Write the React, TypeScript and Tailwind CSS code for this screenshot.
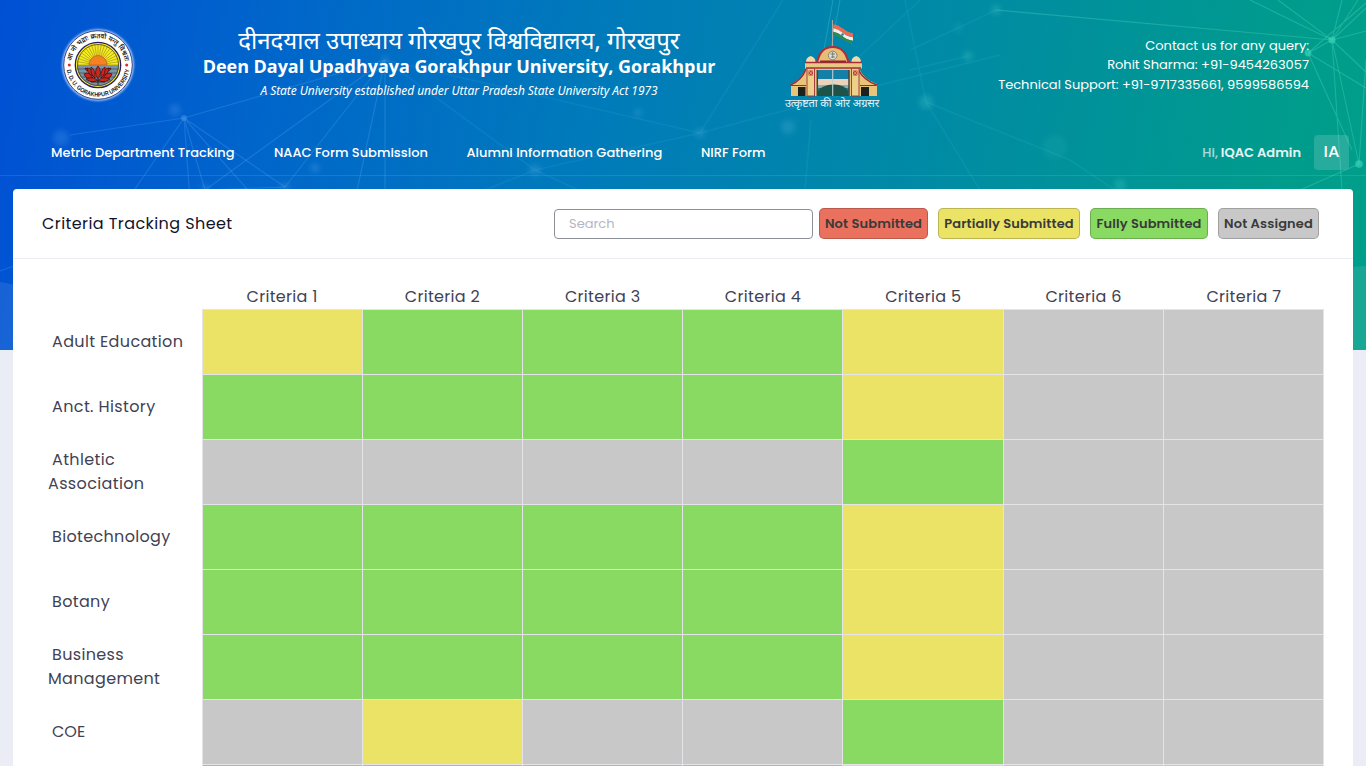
import type { ReactNode } from "react";

type Status = "none" | "partial" | "full" | "na";

const statusColor: Record<Status, string> = {
  none: "bg-[#ea715e]",
  partial: "bg-[#ebe366]",
  full: "bg-[#88da63]",
  na: "bg-[#c8c8c8]",
};

const P: Status = "partial";
const F: Status = "full";
const N: Status = "na";

const rows: { name: string[]; cells: Status[]; tracking: string }[] = [
  { name: ["Adult Education"], cells: [P, F, F, F, P, N, N], tracking: "tracking-[0.360px]" },
  { name: ["Anct. History"], cells: [F, F, F, F, P, N, N], tracking: "tracking-[0.380px]" },
  { name: ["Athletic", "Association"], cells: [N, N, N, N, F, N, N], tracking: "tracking-[0.360px]" },
  { name: ["Biotechnology"], cells: [F, F, F, F, P, N, N], tracking: "tracking-[0.340px]" },
  { name: ["Botany"], cells: [F, F, F, F, P, N, N], tracking: "tracking-[0.340px]" },
  { name: ["Business", "Management"], cells: [F, F, F, F, P, N, N], tracking: "tracking-[0.340px]" },
  { name: ["COE"], cells: [N, P, N, N, F, N, N], tracking: "tracking-[0px]" },
];

const nextRow: Status[] = [F, F, F, F, P, N, N];

function Network() {
  return (
    <svg className="absolute inset-0" width="1366" height="350" viewBox="0 0 1366 350" fill="none">
      <defs>
        <filter id="soft" x="-100%" y="-100%" width="300%" height="300%">
          <feGaussianBlur stdDeviation="2.5" />
        </filter>
        <filter id="line" x="0" y="0" width="1366" height="350" filterUnits="userSpaceOnUse">
          <feGaussianBlur stdDeviation="0.6" />
        </filter>
      </defs>
      <g stroke="#7fc4ff" strokeOpacity="0.19" strokeWidth="1.2" filter="url(#line)">
        <path d="M184 118 385 60M184 118 110 225M184 118 190 200M184 118 205 190M184 118 285 187M184 118 270 215M184 118 70 135" />
        <path d="M385 60 205 190M385 60 285 187M385 60 355 200M385 60 385 200M205 190 130 235M205 190 285 187M0 271 14 266" />
      </g>
      <g stroke="#66d0e8" strokeOpacity="0.09" strokeWidth="1.6" filter="url(#line)">
        <path d="M385 60 535 170M385 60 700 133M535 170 460 200M535 170 600 200M535 170 700 133M700 133 783 0M700 133 880 85M880 85 1000 55M811 120 805 190M920 0 845 70" />
        <path d="M926 102 905 0M926 102 980 190M926 102 1070 160M1070 160 1130 200M968 56 910 70M996 10 958 28 910 50" />
      </g>
      <path d="M833 0 822 60M840 0 829 60" stroke="#7fd6e8" strokeOpacity="0.25" />
      <g stroke="#6ff0d0" strokeOpacity="0.25" strokeWidth="1.1" filter="url(#line)">
        <path d="M1332 40 996 10M1332 40 1278 0M1332 40 1342 0M1332 40 1358 0M1332 40 1366 8M1332 40 1366 31M1332 40 1366 72M1332 40 1359 164M1332 40 1342 190M1332 40 1308 53M1308 53 1366 88M1308 53 1366 3M1308 53 1352 150" />
        <path d="M1366 60 1359 164M1359 164 1300 190M1332 40 1250 0" />
      </g>
      <g fill="#9ad4ff" fillOpacity="0.14" filter="url(#soft)">
        <circle cx="175" cy="110" r="6" />
        <circle cx="61" cy="138" r="8" />
        <circle cx="315" cy="168" r="5" />
        <circle cx="385" cy="60" r="4" />
        <circle cx="205" cy="188" r="4" />
        <circle cx="285" cy="187" r="5" />
        <circle cx="535" cy="170" r="6" />
        <circle cx="638" cy="113" r="4" />
        <circle cx="700" cy="133" r="5" />
        <circle cx="788" cy="127" r="7" />
      </g>
      <g fill="#6fe8dc" fillOpacity="0.18" filter="url(#soft)">
        <circle cx="926" cy="102" r="7" />
        <circle cx="996" cy="10" r="5" />
        <circle cx="968" cy="56" r="5" />
        <circle cx="1120" cy="185" r="6" />
      </g>
      <g fill="#6fe8dc" fillOpacity="0.07" filter="url(#soft)">
        <circle cx="958" cy="28" r="5" />
        <circle cx="1055" cy="147" r="12" />
      </g>
      <circle cx="184" cy="118" r="3" fill="#4a9cf0" fillOpacity="0.5" />
      <g fill="#3fd8c0" fillOpacity="0.6">
        <circle cx="1332" cy="40" r="3.6" />
        <circle cx="1308" cy="53" r="3.4" />
        <circle cx="1359" cy="164" r="3.8" />
      </g>
      <path d="M0 282 C230 328 480 345 700 340 C960 332 1180 276 1366 266 V350 H0Z" fill="#fff" fillOpacity="0.09" />
    </svg>
  );
}

function Seal() {
  const rays = Array.from({ length: 21 }, (_, i) => Math.PI + (i * Math.PI) / 20);
  return (
    <svg className="block" width="80" height="80" viewBox="0 0 80 80">
      <defs>
        <path id="arcTop" d="M13.2 40 A26.800 26.800 0 1 1 66.800 40" />
        <path id="arcBottom" d="M8.300 40 A31.700 31.700 0 0 0 71.700 40" />
        <clipPath id="disc"><circle cx="40" cy="40" r="21" /></clipPath>
        <filter id="halo" x="-20%" y="-20%" width="140%" height="140%"><feGaussianBlur stdDeviation="1" /></filter>
      </defs>
      <circle cx="40" cy="40" r="35.800" fill="#b9d8ff" filter="url(#halo)" />
      <circle cx="40" cy="40" r="34.300" fill="#fff" stroke="#273078" strokeWidth="0.9" />
      <circle cx="40" cy="40" r="22.700" fill="#f6ee2e" stroke="#29205c" strokeWidth="1.3" />
      <g clipPath="url(#disc)">
        <rect x="18" y="18" width="44" height="22" fill="#f5eb1f" />
        {rays.map((a) => (
          <line key={a} x1={40} y1={40} x2={40 + 21 * Math.cos(a)} y2={40 + 21 * Math.sin(a)} stroke="#8a7a20" strokeWidth="0.55" />
        ))}
        <rect x="18" y="40" width="44" height="23" fill="#7d93a8" />
        <path d="M18 44H62M18 48H62M18 52H62M18 56H62" stroke="#33424f" strokeWidth="0.6" />
        <path d="M31 40a9 9.500 0 0 1 18 0Z" fill="#f58220" stroke="#b8541a" strokeWidth="0.6" />
      </g>
      <circle cx="40" cy="40" r="20.500" fill="none" stroke="#3a3215" strokeWidth="0.7" />
      <g fill="#c9281f" stroke="#3b0c0c" strokeWidth="0.7">
        <path d="M27 43q4 0 5 3-4 1-5-3ZM53 43q-4 0-5 3 4 1 5-3Z" />
        <path d="M26 49q5-3 9 4-7 2-9-4ZM54 49q-5-3-9 4 7 2 9-4Z" />
        <path d="M29 43q5 0 7 8-6-1-7-8ZM51 43q-5 0-7 8 6-1 7-8Z" />
        <path d="M33 42q5 3 4 11-5-4-4-11ZM47 42q-5 3-4 11 5-4 4-11Z" />
        <path d="M40 41q5 6 0 13-5-7 0-13Z" />
        <path d="M28 54q6-3 12 1-6 4-12-1ZM52 54q-6-3-12 1 6 4 12-1Z" />
      </g>
      <path d="M33 57h14M40 55v5" stroke="#1d1d1d" strokeWidth="0.9" />
      <circle cx="11.300" cy="40" r="1.500" fill="#e3262e" />
      <circle cx="68.700" cy="40" r="1.500" fill="#e3262e" />
      <text fontSize="7" fontWeight="600" fill="#1b1b1b" fontFamily="'Noto Sans Devanagari','Noto Sans',sans-serif">
        <textPath href="#arcTop" startOffset="4" textLength="76" lengthAdjust="spacingAndGlyphs">आ नो भद्राः क्रतवो यन्तु विश्वतः</textPath>
      </text>
      <text fontSize="6.200" fontWeight="700" fill="#1b1b1b" fontFamily="'Liberation Sans',sans-serif">
        <textPath href="#arcBottom" startOffset="5" textLength="90" lengthAdjust="spacingAndGlyphs">D. D. U. GORAKHPUR UNIVERSITY</textPath>
      </text>
    </svg>
  );
}

function Gate() {
  return (
    <svg className="block" width="94" height="78" viewBox="0 0 94 78">
      <path d="M47.500 0V28" stroke="#a9a9a4" strokeWidth="1" />
      <path d="M48.300 4.300q5 .5 9 4 5 4 10.700 5v4q-7-1-11-5-4-3-8.700-4Z" fill="#ee6a4e" />
      <path d="M48.300 8.300q5 1 9 4.200 4 4 10.700 4.800v3.500q-7-1-11-5-4-3-8.700-4Z" fill="#f1f1ea" />
      <path d="M48.200 11.800q5 1 8.800 4 4 4 10.500 5l-.8 3.500q-6-3-10-5.300-4-3-8.500-3.300Z" fill="#2c8a57" />
      <circle cx="57.500" cy="14.500" r="1.200" fill="#4a6a9a" />
      <path d="M6 76V64q11-5 15-16h53q4 11 18 16v12Z" fill="#e8c47a" />
      <path d="M21 49Q17 60 5.500 65M73 49Q78 60 92 65" stroke="#9e2f35" strokeWidth="1.600" fill="none" />
      <path d="M32 76V50h32v26Z" fill="#1480a8" />
      <path d="M32 59h32v6H32Z" fill="#ead3bd" />
      <path d="M32 65h32v3H32Z" fill="#8fb0a8" />
      <path d="M33 76V71q4-6 15-6.500t15 6.500v5Z" fill="#1f5347" />
      <path d="M47.700 50V76" stroke="#bcd0d4" strokeWidth="1.100" />
      <path d="M32.300 50v26M64 50v26" stroke="#4a4037" strokeWidth="1.500" />
      <path d="M22 48h7.500v28h-7.500ZM66.500 48h7.500v28h-7.500Z" fill="#edd08a" stroke="#9e2f35" strokeWidth="0.900" />
      <path d="M23.500 50.500h4.500v5h-4.500ZM68 50.500h4.500v5h-4.500Z" fill="#b93c3b" />
      <path d="m23.500 50.500 4.500 5m0-5-4.500 5M68 50.500l4.500 5m0-5-4.500 5" stroke="#eac37d" strokeWidth="0.700" />
      <path d="M6 65.500h15M75 65.500h16.500" stroke="#9e2f35" strokeWidth="1.200" />
      <path d="M13 67h7.500v9h-7.500ZM76 67h8v9h-8Z" fill="#1e211b" />
      <path d="M21 42.500q-.5-5 4.700-6.500 5.200 1.500 4.700 6.500ZM66.500 42.500q-.5-5 4.700-6.500 5.200 1.500 4.700 6.500Z" fill="#f0dba4" />
      <path d="M32 43q3-16 15.700-16T63.500 43Z" fill="#e8bd73" stroke="#ad2f3b" strokeWidth="2.200" />
      <circle cx="47.700" cy="35.500" r="4.300" fill="#dcdcd2" stroke="#626a66" strokeWidth="0.700" />
      <path d="M45.500 34h4.600M46 37h4M47.700 32v6" stroke="#626a66" strokeWidth="0.800" />
      <path d="M20 42.500h57v6H20Z" fill="#e9c884" />
      <path d="M20 42.500h57M21 48h55" stroke="#a72e38" strokeWidth="1.500" />
      <path d="M35 41.500h26" stroke="#8c2830" strokeWidth="2" />
    </svg>
  );
}

function Legend({ status, className, children }: { status: Status; className: string; children: ReactNode }) {
  return (
    <span className={`flex h-[31px] items-center justify-center rounded-[5px] border border-black/20 text-[13px] font-semibold tracking-[0.13px] whitespace-nowrap text-[#3a3a3a] ${statusColor[status]} ${className}`}>
      {children}
    </span>
  );
}

export default function App() {
  return (
    <div className="relative h-[766px] w-[1366px] overflow-hidden bg-[#eaecf6] font-['Poppins','Inter',sans-serif]">
      <div className="absolute inset-x-0 top-0 h-[350px] bg-[linear-gradient(100deg,#0050d4_0%,#0066cb_20%,#007abb_42%,#008aa6_66%,#009c8c_92%,#009f8a_100%)]">
        <Network />
      </div>

      <div className="relative flex h-full flex-col">
        <header className="flex h-[130px] shrink-0 pl-[58px] text-white">
          <div className="w-[80px] pt-[25px]"><Seal /></div>
          <div className="ml-[64px] flex w-[514px] flex-col items-center whitespace-nowrap font-['Noto_Sans',sans-serif]">
            <div className="mt-[29px] font-['Noto_Sans_Devanagari','Noto_Sans',sans-serif] text-[24px] leading-[28px]">दीनदयाल उपाध्याय गोरखपुर विश्वविद्यालय, गोरखपुर</div>
            <div className="-mt-px font-['Open_Sans',sans-serif] text-[18px] leading-[20px] tracking-[-0.040px] font-bold">Deen Dayal Upadhyaya Gorakhpur University, Gorakhpur</div>
            <div className="mt-[6px] text-[12px] leading-[18px] tracking-[-0.060px] italic">A State University established under Uttar Pradesh State University Act 1973</div>
          </div>
          <div className="ml-[69px] flex w-[94px] flex-col items-center pt-[20px]">
            <Gate />
            <div className="-mt-[2px] font-['Noto_Sans_Devanagari','Noto_Sans',sans-serif] text-[11px] leading-[16px] tracking-[-0.060px] whitespace-nowrap text-white/90">उत्कृष्टता की ओर अग्रसर</div>
          </div>
          <div className="mr-[57px] ml-auto pt-[35.9px] text-right text-[13px] leading-[19.5px] whitespace-nowrap">
            <div>Contact us for any query:</div>
            <div>Rohit Sharma: +91-9454263057</div>
            <div>Technical Support: +91-9717335661, 9599586594</div>
          </div>
        </header>

        <nav className="flex h-[46px] shrink-0 items-center border-b border-white/10 pl-[51px] text-[13px] font-medium whitespace-nowrap text-white">
          <a className="w-[223px]">Metric Department Tracking</a>
          <a className="w-[192.500px]">NAAC Form Submission</a>
          <a className="w-[234.500px]">Alumni Information Gathering</a>
          <a>NIRF Form</a>
          <div className="mr-[17px] ml-auto flex items-center">
            <span className="text-white/65">Hi,</span>
            <span className="ml-[3px] font-semibold text-white/90">IQAC Admin</span>
            <span className="ml-[13px] flex size-[35px] items-center justify-center rounded-[4px] bg-white/15 text-[16.500px] font-medium">IA</span>
          </div>
        </nav>

        <main className="mx-[13px] mt-[13px] min-h-0 flex-1 overflow-hidden rounded-t-[4px] bg-white">
          <div className="flex h-[70px] items-center border-b border-[#ebedf2] pr-[34px] pl-[29px]">
            <h1 className="text-[16px] tracking-[0.420px] text-[#11132b]">Criteria Tracking Sheet</h1>
            <div className="ml-auto flex items-center">
              <input className="mr-[6px] h-[30px] w-[259px] rounded-[4px] border border-[#8d8f99] px-[14px] text-[13px] placeholder:text-[#b4b6c3]" placeholder="Search" />
              <div className="flex gap-[10px]">
                <Legend status="none" className="w-[109px]">Not Submitted</Legend>
                <Legend status="partial" className="w-[142px]">Partially Submitted</Legend>
                <Legend status="full" className="w-[118px]">Fully Submitted</Legend>
                <Legend status="na" className="w-[101px]">Not Assigned</Legend>
              </div>
            </div>
          </div>

          <div className="flex pt-[25px] pl-[35px] text-[16px] leading-[24px] text-[#3f4254]">
            <div className="w-[154px] shrink-0 pt-[25px]">
              {rows.map((row) => (
                <div key={row.name[0]} className={`flex h-[65px] flex-col justify-center whitespace-nowrap ${row.tracking}`}>
                  {row.name.map((line, i) => (
                    <span key={line} className={i === 0 ? "pl-[4px]" : ""}>{line}</span>
                  ))}
                </div>
              ))}
            </div>
            <div className="w-[1122px] shrink-0">
              <div className="grid grid-cols-7 text-center">
                {[1, 2, 3, 4, 5, 6, 7].map((n) => (
                  <div key={n} className="h-[25px] pt-px tracking-[0.320px]">Criteria {n}</div>
                ))}
              </div>
              <div className="grid grid-cols-[159px_159px_159px_159px_160px_159px_159px] gap-px bg-[#e4e4e8] p-px">
                {rows.flatMap((row) =>
                  row.cells.map((cell, i) => <div key={`${row.name[0]}-${i}`} className={`h-[64px] ${statusColor[cell]}`} />),
                )}
                {nextRow.map((cell, i) => <div key={i} className={`h-[64px] ${statusColor[cell]}`} />)}
              </div>
            </div>
          </div>
        </main>
      </div>
    </div>
  );
}
